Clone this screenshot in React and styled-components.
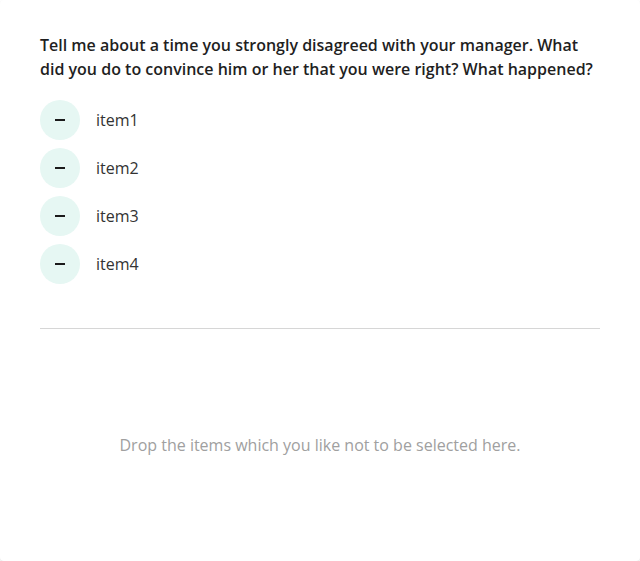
import React from 'react';
import styled, { createGlobalStyle } from 'styled-components';

const GlobalStyle = createGlobalStyle`
  html, body {
    margin: 0;
    padding: 0;
    background: #fff;
  }
  body {
    font-family: "Open Sans", "Noto Sans", sans-serif;
  }
`;

const Card = styled.div`
  box-sizing: border-box;
  width: 640px;
  height: 561px;
  background: #fff;
  border-radius: 4px;
  box-shadow: 0 1px 2px rgba(0, 0, 0, 0.12);
  padding: 33px 40px 0;
  display: flex;
  flex-direction: column;
`;

const Question = styled.h2`
  margin: 0;
  font-size: 16px;
  font-weight: 600;
  line-height: 24px;
  color: #1f1f1f;
`;

const List = styled.div`
  display: flex;
  flex-direction: column;
  gap: 8px;
  margin-top: 19px;
`;

const Row = styled.div`
  display: flex;
  align-items: center;
  gap: 16px;
  height: 40px;
`;

const RemoveButton = styled.button`
  width: 40px;
  height: 40px;
  border: none;
  border-radius: 50%;
  background: #e6f7f3;
  display: flex;
  align-items: center;
  justify-content: center;
  padding: 0;
  cursor: pointer;

  &::before {
    content: '';
    width: 10px;
    height: 2px;
    background: #1a1a1a;
  }
`;

const Label = styled.span`
  font-size: 16px;
  color: #333;
`;

const Divider = styled.hr`
  border: none;
  border-top: 1px solid #d6d6d6;
  margin: 44px 0 0;
`;

const DropZone = styled.div`
  flex: 1;
  display: flex;
  justify-content: center;
  padding-top: 105px;
  font-size: 16px;
  color: #a0a0a0;
`;

const items = ['item1', 'item2', 'item3', 'item4'];

const App = () => {
  return (
    <>
      <GlobalStyle />
      <Card>
        <Question>
          Tell me about a time you strongly disagreed with your manager. What
          did you do to convince him or her that you were right? What happened?
        </Question>
        <List>
          {items.map((item) => (
            <Row key={item}>
              <RemoveButton aria-label={`remove ${item}`} />
              <Label>{item}</Label>
            </Row>
          ))}
        </List>
        <Divider />
        <DropZone>Drop the items which you like not to be selected here.</DropZone>
      </Card>
    </>
  );
};

export default App;
